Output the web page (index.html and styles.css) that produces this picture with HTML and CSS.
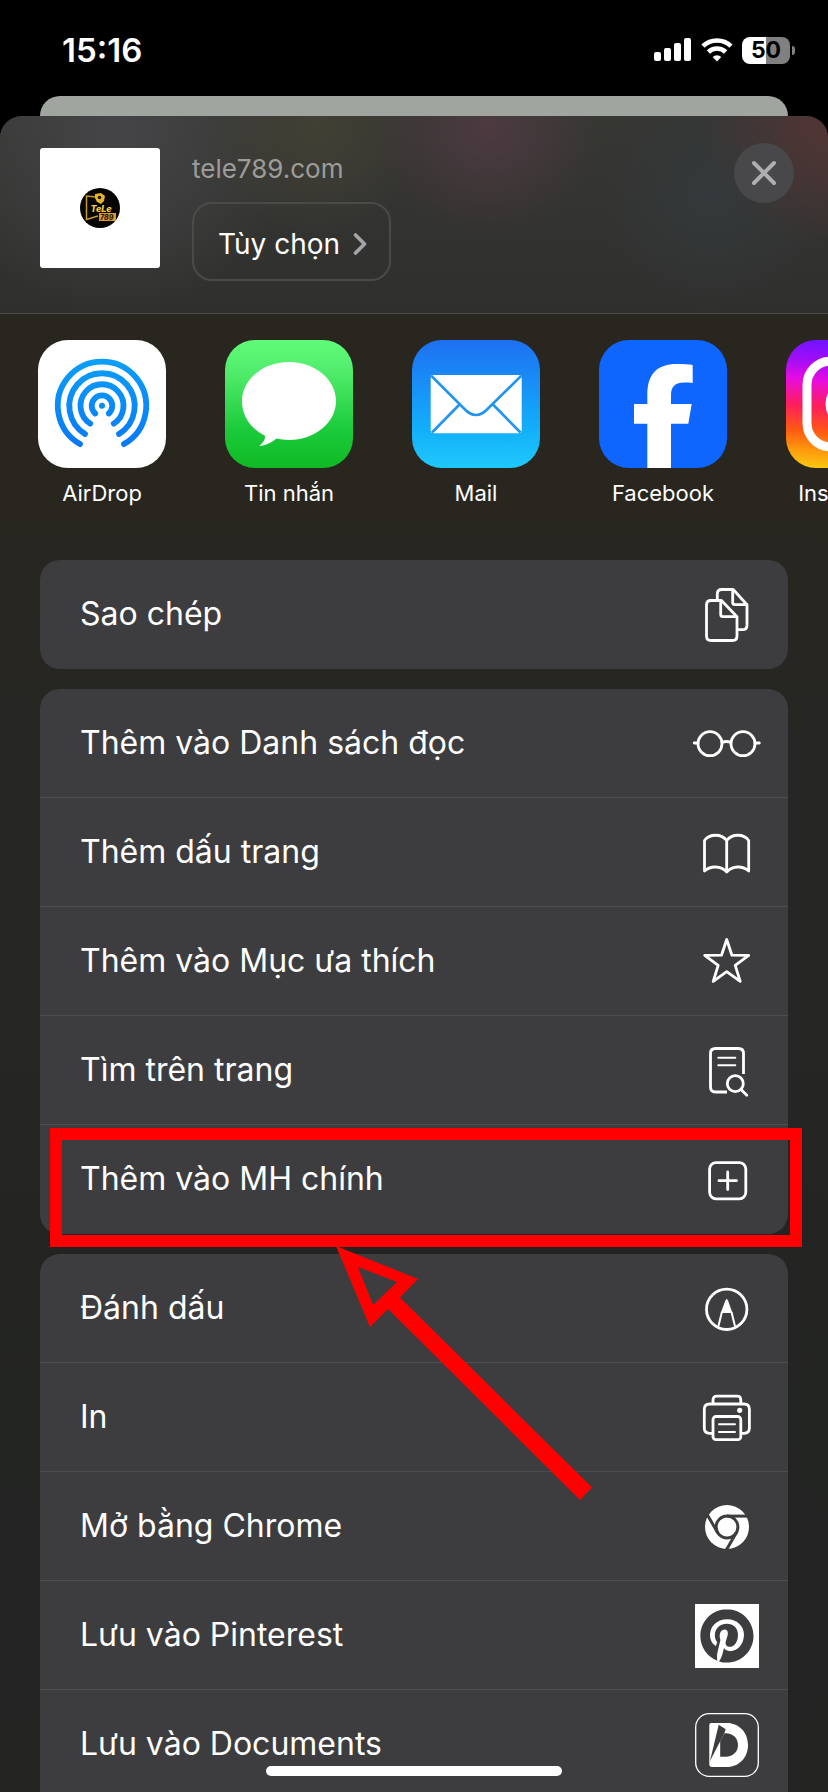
FILE: index.html
```html
<!DOCTYPE html>
<html lang="vi">
<head>
<meta charset="utf-8">
<meta name="viewport" content="width=device-width, initial-scale=1">
<title>tele789.com</title>
<link rel="stylesheet" href="styles.css">
</head>
<body>
<div class="screen">
  <header class="status">
    <time class="clock">15:16</time>
    <div class="indicators">
      <svg width="38" height="24" viewBox="0 0 38 24" fill="#fff" aria-hidden="true">
        <rect x="0" y="14" width="7" height="9" rx="2"/><rect x="10" y="10" width="7" height="13" rx="2"/><rect x="20" y="5" width="7" height="18" rx="2"/><rect x="30" y="0" width="7" height="23" rx="2"/>
      </svg>
      <svg width="32" height="26" viewBox="0 0 32 26" fill="none" stroke="#fff" stroke-width="4.6" aria-hidden="true">
        <path d="M2 9.2a20 20 0 0 1 28 0"/><path d="M7.4 15a12.2 12.2 0 0 1 17.2 0"/>
        <path d="M16 24.5l-4.3-4.6a6.2 6.2 0 0 1 8.600 0z" fill="#fff" stroke="none"/>
      </svg>
      <div class="battery"><span class="battery-level">50</span></div>
    </div>
  </header>
  <div class="page-behind"></div>
  <main class="sheet">
    <section class="sheet-head">
      <div class="thumb">
        <svg width="40" height="40" viewBox="0 0 40 40" aria-hidden="true">
          <circle cx="20" cy="20" r="20" fill="#050403"/>
          <path d="M16 9L6.500 8v23.500L18 28" fill="none" stroke="#c99a22" stroke-width="1.500"/>
          <path d="M15 6l6-1 4 3-1 5-3 3-4-2-2-4z" fill="#e3b52c"/><circle cx="19.500" cy="9.500" r="1.800" fill="#1a1205"/>
          <rect x="19" y="25" width="17" height="8" fill="#dc9a30"/>
          <text x="10.500" y="24" class="logo-top">TeLe</text>
          <text x="20" y="31.500" class="logo-num">789</text>
        </svg>
      </div>
      <div class="site">
        <p class="domain">tele789.com</p>
        <button class="options" type="button">Tùy chọn
          <svg width="14" height="22" viewBox="0 0 14 22" fill="none" stroke="#a5a5aa" stroke-width="3.600" stroke-linecap="round" stroke-linejoin="round" aria-hidden="true"><path d="M2.500 2l9 9-9 9"/></svg>
        </button>
      </div>
      <button class="close" type="button" aria-label="Đóng">
        <svg width="26" height="26" viewBox="0 0 26 26" fill="none" stroke="#afadb2" stroke-width="4" stroke-linecap="round" aria-hidden="true"><path d="M3 3l20 20M23 3L3 23"/></svg>
      </button>
    </section>

    <nav class="apps">
      <button class="app" type="button">
        <svg class="tile" viewBox="0 0 128 128" aria-hidden="true">
          <defs><linearGradient id="air" gradientUnits="userSpaceOnUse" x1="0" y1="18" x2="0" y2="108"><stop offset="0" stop-color="#0aa0f8"/><stop offset="1" stop-color="#0a78f5"/></linearGradient></defs>
          <rect width="128" height="128" fill="#fff"/>
          <g fill="none" stroke="url(#air)" stroke-width="5.800" stroke-linecap="round">
            <path d="M42 104.100A44.200 44.200 0 1 1 86 104.100"/>
            <path d="M47 93.900A32.700 32.700 0 1 1 81 93.900"/>
            <path d="M52.200 83.700A21.500 21.500 0 1 1 75.800 83.700"/>
            <path d="M57.200 73.500A10.300 10.300 0 1 1 70.800 73.500"/>
          </g>
          <circle cx="64" cy="65.700" r="3" fill="#078df5"/>
        </svg>
        <span>AirDrop</span>
      </button>
      <button class="app" type="button">
        <svg class="tile" viewBox="0 0 128 128" aria-hidden="true">
          <defs><linearGradient id="msg" x1="0" y1="0" x2="0" y2="1"><stop offset="0" stop-color="#5ffb79"/><stop offset=".25" stop-color="#51ec6b"/><stop offset=".7" stop-color="#1bcb3b"/><stop offset="1" stop-color="#10b924"/></linearGradient></defs>
          <rect width="128" height="128" fill="url(#msg)"/>
          <path d="M64 22c26 0 47 17.500 47 39s-21 39-47 39c-4.500 0-8.600-.6-12.600-1.400-4.500 4-10.500 7-17.400 7.400 3.400-2.600 6.800-6.500 5.800-10.500C25.500 88.500 17 76 17 61c0-21.500 21-39 47-39z" fill="#fff"/>
        </svg>
        <span>Tin nhắn</span>
      </button>
      <button class="app" type="button">
        <svg class="tile" viewBox="0 0 128 128" aria-hidden="true">
          <defs><linearGradient id="mail" x1="0" y1="0" x2="0" y2="1"><stop offset="0" stop-color="#1e70f2"/><stop offset=".7" stop-color="#12affa"/><stop offset="1" stop-color="#1fc9fb"/></linearGradient></defs>
          <rect width="128" height="128" fill="url(#mail)"/>
          <rect x="18.700" y="35" width="91" height="58.300" rx="3" fill="#fff"/>
          <path d="M19.500 36L52 68.500q12 13 24 0L109 36M20 92.500l27.500-28M108.500 92.500L81 64.500" fill="none" stroke="#2295ee" stroke-width="2.600"/>
        </svg>
        <span>Mail</span>
      </button>
      <button class="app" type="button">
        <svg class="tile" viewBox="0 0 128 128" aria-hidden="true">
          <rect width="128" height="128" fill="#0f66ff"/>
          <path d="M48.300 128V83.700H35V64h13.300V55c0-21 9.700-31 29.700-31 6 0 11.500.2 15.700 1v18c-2.700-.4-5-.4-8-.4-10 0-13.700 4-13.700 13V64h20.700L89.300 83.700H72V128z" fill="#fff"/>
        </svg>
        <span>Facebook</span>
      </button>
      <button class="app" type="button">
        <svg class="tile" viewBox="0 0 128 128" aria-hidden="true">
          <defs>
            <linearGradient id="ig" x1=".08" y1="0" x2="0" y2="1"><stop offset="0" stop-color="#7313ff"/><stop offset=".16" stop-color="#a60df5"/><stop offset=".3" stop-color="#e80ce0"/><stop offset=".5" stop-color="#fd1e5c"/><stop offset=".7" stop-color="#fd5a12"/><stop offset=".85" stop-color="#fd9a0d"/><stop offset="1" stop-color="#f8cf12"/></linearGradient>
          </defs>
          <rect width="128" height="128" fill="url(#ig)"/>
          <g fill="none" stroke="#fff" stroke-width="9"><rect x="21" y="21" width="86" height="86" rx="24"/><circle cx="64" cy="64" r="20"/></g>
          <circle cx="89" cy="39" r="5.500" fill="#fff"/>
        </svg>
        <span>Instagram</span>
      </button>
    </nav>

    <div class="groups">
      <section class="group">
        <button class="row" type="button">Sao chép
          <svg class="icon" viewBox="0 0 64 64" aria-hidden="true"><path d="M22.300 17v-5q0-4.500 4.500-4.500h11.400L52 22.700v20.500q0 4.500-4.500 4.500H43M37.700 7.500v13q0 2.200 2.200 2.200H52"/><path d="M16 18.500h10.500L42 34.700V54q0 4.500-4.500 4.500H16q-4.500 0-4.500-4.500V23q0-4.500 4.500-4.500zM25.700 18.500v14q0 2.200 2.200 2.200H42"/></svg>
        </button>
      </section>
      <section class="group">
        <button class="row" type="button">Thêm vào Danh sách đọc
          <svg class="icon" viewBox="0 0 64 64" aria-hidden="true"><circle cx="15" cy="32.700" r="12"/><circle cx="48" cy="32.700" r="12"/><path d="M27 31.500q4.500-2 9 0M-.8 32H3M60 32h4.300"/></svg>
        </button>
        <button class="row" type="button">Thêm dấu trang
          <svg class="icon" viewBox="0 0 64 64" aria-hidden="true"><path d="M31.700 20.500C26.500 13.500 14.500 13.500 9.500 20.500V51c6-5.500 16.500-5.500 22.200 1 5.700-6.500 16-6.500 22-1V20.500c-5-7-16.800-7-22 0zV52"/></svg>
        </button>
        <button class="row" type="button">Thêm vào Mục ưa thích
          <svg class="icon" viewBox="0 0 64 64" aria-hidden="true"><path d="M31.700 10.500l5.200 15.700 16.800.2-13.500 10 5 16-13.500-9.700-13.500 9.700 5-16-13.500-10 16.800-.2z"/></svg>
        </button>
        <button class="row" type="button">Tìm trên trang
          <svg class="icon" viewBox="0 0 64 64" aria-hidden="true"><path d="M32 54H20.500q-5-.2-5-5V15.500q0-5 5-5h23q5 0 5 5V36" stroke-linecap="butt"/><path d="M23.300 19.700h17M23.300 27.200h17" stroke-width="2"/><circle cx="40.300" cy="45.700" r="8"/><path d="M46.300 51.700l5.500 5.500"/></svg>
        </button>
        <div class="marked">
          <button class="row" type="button">Thêm vào MH chính
            <svg class="icon" viewBox="0 0 64 64" aria-hidden="true"><rect x="14.600" y="15.600" width="36.200" height="36.200" rx="6.500"/><path d="M24 33.700h17.500M32.700 25v17.500"/></svg>
          </button>
          <div class="highlight"></div>
          <svg class="arrow" width="256" height="254" viewBox="0 0 256 254" aria-hidden="true"><path fill="#f00" fill-rule="evenodd" d="M0 0L82 33 64 51.500 256 241.500 244 254 52 63 34 81zM22 21l15 38L61 36z"/></svg>
        </div>
      </section>
      <section class="group group-open">
        <button class="row" type="button">Đánh dấu
          <svg class="icon" viewBox="0 0 64 64" aria-hidden="true"><circle cx="31.700" cy="33.300" r="20.200"/><path d="M25.700 37l4.700-12.500q1.300-3 2.600 0L37.500 37z" fill="#fff" stroke="none"/><path d="M26.800 36.500L23.200 51M36.600 36.500L40.200 51" stroke-width="2"/></svg>
        </button>
        <button class="row" type="button">In
          <svg class="icon" viewBox="0 0 64 64" aria-hidden="true"><path d="M18 18.500V15q0-3.800 3.800-3.800h20.400q3.600 0 3.600 3.800v3.500M17.500 48.300h-3q-5.200 0-5.200-5.200V24.200q0-5.200 5.200-5.200h34.700q5.200 0 5.200 5.200v18.900q0 5.200-5.200 5.200h-3"/><rect x="18" y="31.500" width="27.800" height="23.200" rx="3"/><path d="M24 39.300h16M24 47h16" stroke-width="2"/><circle cx="44.700" cy="25.300" r="2.600" fill="#fff" stroke="none"/></svg>
        </button>
        <button class="row" type="button">Mở bằng Chrome
          <svg class="icon" viewBox="0 0 64 64" aria-hidden="true"><circle cx="32" cy="33" r="22" fill="#fff" stroke="none"/><g stroke="#3d3d3f" stroke-linecap="butt" stroke-width="3"><circle cx="32" cy="33" r="10.900"/><path d="M32 22.100h24"/><path d="M32 22.100h24" transform="rotate(120 32 33)"/><path d="M32 22.100h24" transform="rotate(240 32 33)"/></g></svg>
        </button>
        <button class="row" type="button">Lưu vào Pinterest
          <svg class="icon" viewBox="0 0 64 64" aria-hidden="true"><rect y="1" width="64" height="64" fill="#fff" stroke="none"/><path transform="translate(5.300 6.300) scale(2.220)" fill="#3d3d3f" stroke="none" d="M12.017 0C5.396 0 .029 5.367.029 11.987c0 5.079 3.158 9.417 7.618 11.162-.105-.949-.199-2.403.041-3.439.219-.937 1.406-5.957 1.406-5.957s-.359-.72-.359-1.781c0-1.663.967-2.911 2.168-2.911 1.024 0 1.518.769 1.518 1.688 0 1.029-.653 2.567-.992 3.992-.285 1.193.6 2.165 1.775 2.165 2.128 0 3.768-2.245 3.768-5.487 0-2.861-2.063-4.869-5.008-4.869-3.410 0-5.409 2.562-5.409 5.199 0 1.033.394 2.143.889 2.741.099.12.112.225.085.345-.09.375-.293 1.199-.334 1.363-.053.225-.172.271-.401.165-1.495-.69-2.433-2.878-2.433-4.646 0-3.776 2.748-7.252 7.920-7.252 4.158 0 7.392 2.967 7.392 6.923 0 4.135-2.607 7.462-6.233 7.462-1.214 0-2.354-.629-2.758-1.379l-.749 2.848c-.269 1.045-1.004 2.352-1.498 3.146 1.123.345 2.306.535 3.550.535 6.607 0 11.985-5.365 11.985-11.987C23.970 5.390 18.592.026 11.985.026z"/></svg>
        </button>
        <button class="row" type="button">Lưu vào Documents
          <svg class="icon" viewBox="0 0 64 64" aria-hidden="true"><rect x=".7" y="1.700" width="62.600" height="62.600" rx="13.500" stroke-width="1.300"/><path fill="#fff" stroke="none" fill-rule="evenodd" d="M16 11H32C44 11 53 20.500 53 33S44 55 32 55H17q-2.700 0-2.700-2.700V13q0-2 1.700-2zM25.200 29v15.700H31c7 0 12-5 12-11.700S38 21.300 31 21.300H29.500z"/><path d="M23.700 12.700l7 4.600-1.500 4.200L15 49z" fill="#3d3d3f" stroke="none"/></svg>
        </button>
      </section>
    </div>
  </main>
  <div class="home-bar"></div>
</div>
</body>
</html>
```
FILE: styles.css
```css
* { box-sizing: border-box; }
body {
  margin: 0;
  background: #000;
  color: #fff;
  font-family: Inter, "Noto Sans", sans-serif;
}
button {
  border: 0;
  padding: 0;
  background: none;
  color: inherit;
  font: inherit;
}
p { margin: 0; }
svg { display: block; flex: none; }

.screen {
  position: relative;
  display: flex;
  flex-direction: column;
  height: 100vh;
  overflow: hidden;
}
.status {
  display: flex;
  flex: none;
  align-items: center;
  justify-content: space-between;
  height: 96px;
  padding: 4px 32px 0 62px;
}
.clock { font-size: 33px; font-weight: 600; }
.indicators { display: flex; align-items: center; gap: 9px; }
.battery {
  position: relative;
  width: 48px;
  height: 27px;
  margin-right: 6px;
  border-radius: 8px;
  background: linear-gradient(90deg, #fff 50%, #808080 50%);
  color: #000;
  text-align: center;
}
.battery::after {
  content: "";
  position: absolute;
  top: 9px;
  right: -5px;
  width: 3px;
  height: 9px;
  border-radius: 0 4px 4px 0;
  background: #808080;
}
.battery-level { display: block; font-size: 23px; font-weight: 700; line-height: 27px; }
.page-behind {
  flex: none;
  height: 20px;
  margin: 0 40px;
  border-radius: 20px 20px 0 0;
  background: #a0a59f;
}
.sheet {
  flex: 1;
  min-height: 0;
  border-radius: 22px 22px 0 0;
  overflow: hidden;
  background: linear-gradient(180deg, #292620 0, #292620 400px, #262624 620px, #262624 900px, #222422 1300px, #232322 100%);
}
.sheet-head {
  display: flex;
  align-items: flex-start;
  height: 198px;
  padding: 32px 34px 0 40px;
  border-bottom: 1px solid #4d4d4a;
  background:
    radial-gradient(circle at 59% 5%, #4d3a41 0, transparent 110px),
    radial-gradient(circle at 100% 5%, #523535 0, transparent 120px),
    radial-gradient(circle at 38% 5%, #424034 0, transparent 110px),
    radial-gradient(circle at 14% 10%, #454548 0, transparent 180px),
    radial-gradient(circle at 86% 40%, #34393b 0, transparent 120px),
    linear-gradient(180deg, #373734, #2f2f2d);
}
.thumb {
  display: grid;
  place-items: center;
  width: 120px;
  height: 120px;
  border-radius: 3px;
  background: #fff;
}
.logo-top { fill: #f0cf4a; font-size: 9px; font-weight: 800; font-style: italic; }
.logo-num { fill: #2b1704; font-size: 7px; font-weight: 800; font-style: italic; }
.site { display: flex; flex: 1; flex-direction: column; align-items: flex-start; margin-left: 32px; }
.domain { margin: 5px 0 17px; color: #9c9d9b; font-size: 26px; line-height: 32px; }
.options {
  display: flex;
  align-items: center;
  gap: 13px;
  height: 79px;
  padding: 4px 22px 0 24px;
  border: 2px solid #4a4a48;
  border-radius: 20px;
  font-size: 28px;
}
.close {
  display: grid;
  place-items: center;
  width: 60px;
  height: 60px;
  margin-top: -5px;
  border-radius: 50%;
  background: #48474a;
}
.apps {
  display: flex;
  gap: 59px;
  padding: 26px 0 0 38px;
  overflow: hidden;
}
.app {
  display: flex;
  flex: none;
  flex-direction: column;
  align-items: center;
  gap: 11px;
  width: 128px;
  font-size: 22px;
  line-height: 28px;
}
.tile { width: 128px; height: 128px; border-radius: 30px; }
.groups { display: flex; flex-direction: column; gap: 20px; padding: 53px 40px 0; }
.group { border-radius: 20px; background: #3d3d3f; }
.group-open { border-radius: 20px 20px 0 0; }
.row {
  display: flex;
  align-items: center;
  justify-content: space-between;
  width: 100%;
  height: 109px;
  padding: 0 29px 0 40px;
  border-bottom: 1px solid #4d4d4f;
  font-size: 32px;
  line-height: 44px;
  text-align: left;
}
.group > .row:only-child, .marked .row { border-bottom-color: transparent; }
.icon {
  width: 64px;
  height: 64px;
  overflow: visible;
  fill: none;
  stroke: #fff;
  stroke-width: 2.8;
  stroke-linecap: round;
  stroke-linejoin: round;
}
.marked { position: relative; }
.highlight {
  position: absolute;
  top: 3px;
  right: -14px;
  bottom: -13px;
  left: 10px;
  border: 12px solid #f00;
  pointer-events: none;
}
.arrow { position: absolute; top: 121px; left: 296px; pointer-events: none; }
.home-bar {
  position: absolute;
  bottom: 16px;
  left: 50%;
  width: 296px;
  height: 10px;
  margin-left: -148px;
  border-radius: 5px;
  background: #fff;
}
```
